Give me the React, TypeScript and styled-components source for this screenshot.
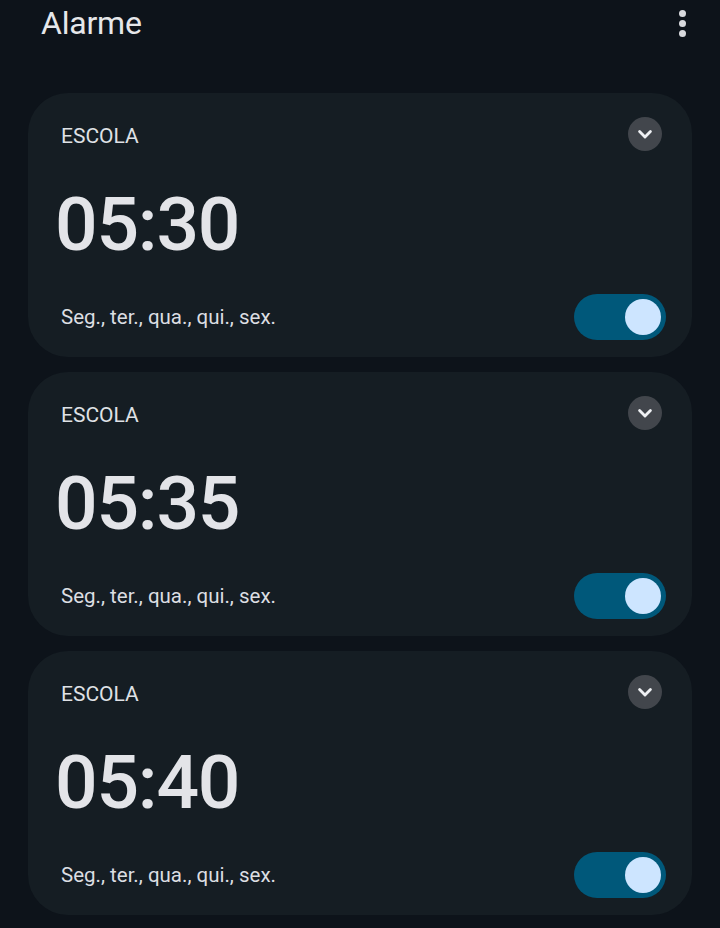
import * as React from 'react'
import styled, { createGlobalStyle } from 'styled-components'

const GlobalStyle = createGlobalStyle`
  html, body {
    margin: 0;
    padding: 0;
    background: #0d131a;
  }
  body {
    font-family: Roboto, 'Open Sans', sans-serif;
    color: #e2e3e7;
  }
`

const Screen = styled.div`
  width: 720px;
  height: 928px;
  overflow: hidden;
  background: #0d131a;
`

const TopBar = styled.header`
  display: flex;
  align-items: center;
  justify-content: space-between;
  height: 46px;
  padding: 0 30px 0 41px;
  margin-bottom: 47px;
`

const Title = styled.h1`
  margin: 0;
  font-size: 32px;
  font-weight: 400;
  letter-spacing: -0.2px;
  color: #e6e7ea;
`

const MenuButton = styled.div`
  display: flex;
  flex-direction: column;
  gap: 3px;
  padding: 4px;
`

const Dot = styled.span`
  width: 7px;
  height: 7px;
  border-radius: 50%;
  background: #d7d9dd;
`

const List = styled.div`
  display: flex;
  flex-direction: column;
  gap: 15px;
  padding: 0 28px;
`

const Card = styled.section`
  height: 264px;
  box-sizing: border-box;
  display: flex;
  flex-direction: column;
  padding: 24px 26px 17px 33px;
  border-radius: 40px;
  background: #151d23;
`

const Row = styled.div`
  display: flex;
  align-items: center;
  justify-content: space-between;
`

const Label = styled.span`
  font-size: 21px;
  padding-top: 3px;
  color: #dfe1e5;
`

const ExpandButton = styled.div`
  width: 34px;
  height: 34px;
  margin-right: 4px;
  border-radius: 50%;
  background: #42464c;
  display: flex;
  align-items: center;
  justify-content: center;
  color: #eef0f3;
`

const Time = styled.div`
  flex: 1;
  display: flex;
  align-items: center;
  margin-left: -6px;
  padding-top: 2px;
  font-size: 75px;
  font-weight: 500;
  letter-spacing: -1.2px;
  color: #e3e4e8;
`

const Days = styled.span`
  font-size: 20.5px;
  color: #dcdee2;
`

const Track = styled.div<{ $on: boolean }>`
  width: 92px;
  height: 46px;
  box-sizing: border-box;
  border-radius: 23px;
  padding: 5px;
  display: flex;
  justify-content: ${p => (p.$on ? 'flex-end' : 'flex-start')};
  align-items: center;
  background: ${p => (p.$on ? '#00587a' : '#3a4148')};
`

const Thumb = styled.span`
  width: 36px;
  height: 36px;
  border-radius: 50%;
  background: #cde5ff;
`

const alarms = [
  { label: 'ESCOLA', time: '05:30', days: 'Seg., ter., qua., qui., sex.', on: true },
  { label: 'ESCOLA', time: '05:35', days: 'Seg., ter., qua., qui., sex.', on: true },
  { label: 'ESCOLA', time: '05:40', days: 'Seg., ter., qua., qui., sex.', on: true }
]

const Chevron = () => (
  <svg width="20" height="20" viewBox="0 0 24 24" fill="none" stroke="currentColor" strokeWidth="3.4" strokeLinecap="round" strokeLinejoin="round">
    <path d="M5.5 9l6.5 6.5 6.5-6.5" />
  </svg>
)

const App = () => {
  return (
    <Screen>
      <GlobalStyle />
      <TopBar>
        <Title>Alarme</Title>
        <MenuButton>
          <Dot />
          <Dot />
          <Dot />
        </MenuButton>
      </TopBar>
      <List>
        {alarms.map((a) => (
          <Card key={a.time}>
            <Row>
              <Label>{a.label}</Label>
              <ExpandButton><Chevron /></ExpandButton>
            </Row>
            <Time>{a.time}</Time>
            <Row>
              <Days>{a.days}</Days>
              <Track $on={a.on}><Thumb /></Track>
            </Row>
          </Card>
        ))}
      </List>
    </Screen>
  )
}

export default App
